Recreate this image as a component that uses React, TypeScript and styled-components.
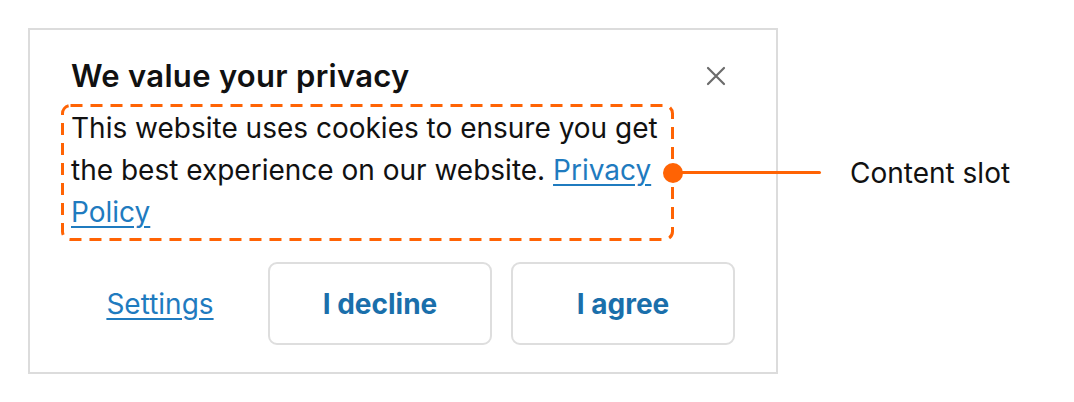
import React from 'react';
import styled, { createGlobalStyle } from 'styled-components';

const GlobalStyle = createGlobalStyle`
  body {
    margin: 0;
    background: #ffffff;
    font-family: Inter, "Noto Sans", "Liberation Sans", sans-serif;
    color: #111111;
  }
`;

const ACCENT = '#ff6304';
const LINK = '#1f7bbf';

const Page = styled.div`
  width: 1074px;
  height: 402px;
  padding: 28px 0 0 28px;
  box-sizing: border-box;
`;

const Card = styled.section`
  width: 750px;
  height: 346px;
  box-sizing: border-box;
  border: 2px solid #dcdcdc;
  padding: 27px 41px 0 41px;
  display: flex;
  flex-direction: column;
`;

const Header = styled.div`
  display: flex;
  align-items: center;
  justify-content: space-between;
  height: 38px;
`;

const Title = styled.h2`
  margin: 0;
  font-size: 31px;
  line-height: 36px;
  font-weight: 600;
  letter-spacing: 0.3px;
  color: #111111;
`;

const CloseButton = styled.button`
  width: 38px;
  height: 38px;
  padding: 9px;
  border: none;
  background: none;
  display: flex;
  align-items: center;
  justify-content: center;
  cursor: pointer;
`;

const Slot = styled.div`
  position: relative;
  width: 613px;
  height: 137px;
  box-sizing: border-box;
  margin: 9px 0 0 -10px;
  padding: 3px 10px 8px 10px;
`;

const Frame = styled.svg`
  position: absolute;
  inset: 0;
  pointer-events: none;
`;

const Message = styled.p`
  margin: 0;
  font-size: 28px;
  line-height: 42px;
  color: #111111;
`;

const Link = styled.a`
  color: ${LINK};
  text-decoration: underline;
  text-decoration-thickness: 2px;
  text-underline-offset: 4px;
  cursor: pointer;
`;

const Callout = styled.div`
  position: absolute;
  left: calc(100% - 11px);
  top: 50%;
  transform: translateY(-50%);
  display: flex;
  align-items: center;
`;

const Dot = styled.span`
  width: 20px;
  height: 20px;
  border-radius: 50%;
  background: ${ACCENT};
`;

const Connector = styled.span`
  width: 140px;
  height: 3px;
  margin-left: -2px;
  border-radius: 2px;
  background: ${ACCENT};
`;

const CalloutLabel = styled.span`
  margin-left: 29px;
  font-size: 28px;
  line-height: 34px;
  color: #111111;
  white-space: nowrap;
`;

const Actions = styled.div`
  display: grid;
  grid-template-columns: 1fr 224px 224px;
  gap: 19px;
  margin-top: 21px;
`;

const SettingsLink = styled.a`
  display: flex;
  align-items: center;
  justify-content: center;
  font-size: 28px;
  color: ${LINK};
  text-decoration: underline;
  text-decoration-thickness: 2px;
  text-underline-offset: 4px;
  cursor: pointer;
`;

const ActionButton = styled.button`
  height: 83px;
  box-sizing: border-box;
  border: 2px solid #dedede;
  border-radius: 9px;
  background: #ffffff;
  font-family: inherit;
  font-size: 28px;
  font-weight: 700;
  color: #1a6fab;
  cursor: pointer;
`;

const CloseIcon = () => (
  <svg width="20" height="20" viewBox="0 0 20 20" fill="none">
    <path d="M2 2 L18 18 M18 2 L2 18" stroke="#6b6b6b" strokeWidth="2.2" strokeLinecap="round" />
  </svg>
);

export default function App() {
  return (
    <Page>
      <GlobalStyle />
      <Card>
        <Header>
          <Title>We value your privacy</Title>
          <CloseButton aria-label="Close">
            <CloseIcon />
          </CloseButton>
        </Header>

        <Slot>
          <Frame width="613" height="137">
            <rect
              x="1.5"
              y="1.5"
              width="610"
              height="134"
              rx="8"
              fill="none"
              stroke={ACCENT}
              strokeWidth="3"
              strokeDasharray="12 8"
            />
          </Frame>
          <Message>
            This website uses cookies to ensure you get the best experience on our website.{' '}
            <Link>Privacy Policy</Link>
          </Message>
          <Callout>
            <Dot />
            <Connector />
            <CalloutLabel>Content slot</CalloutLabel>
          </Callout>
        </Slot>

        <Actions>
          <SettingsLink>Settings</SettingsLink>
          <ActionButton>I decline</ActionButton>
          <ActionButton>I agree</ActionButton>
        </Actions>
      </Card>
    </Page>
  );
}
